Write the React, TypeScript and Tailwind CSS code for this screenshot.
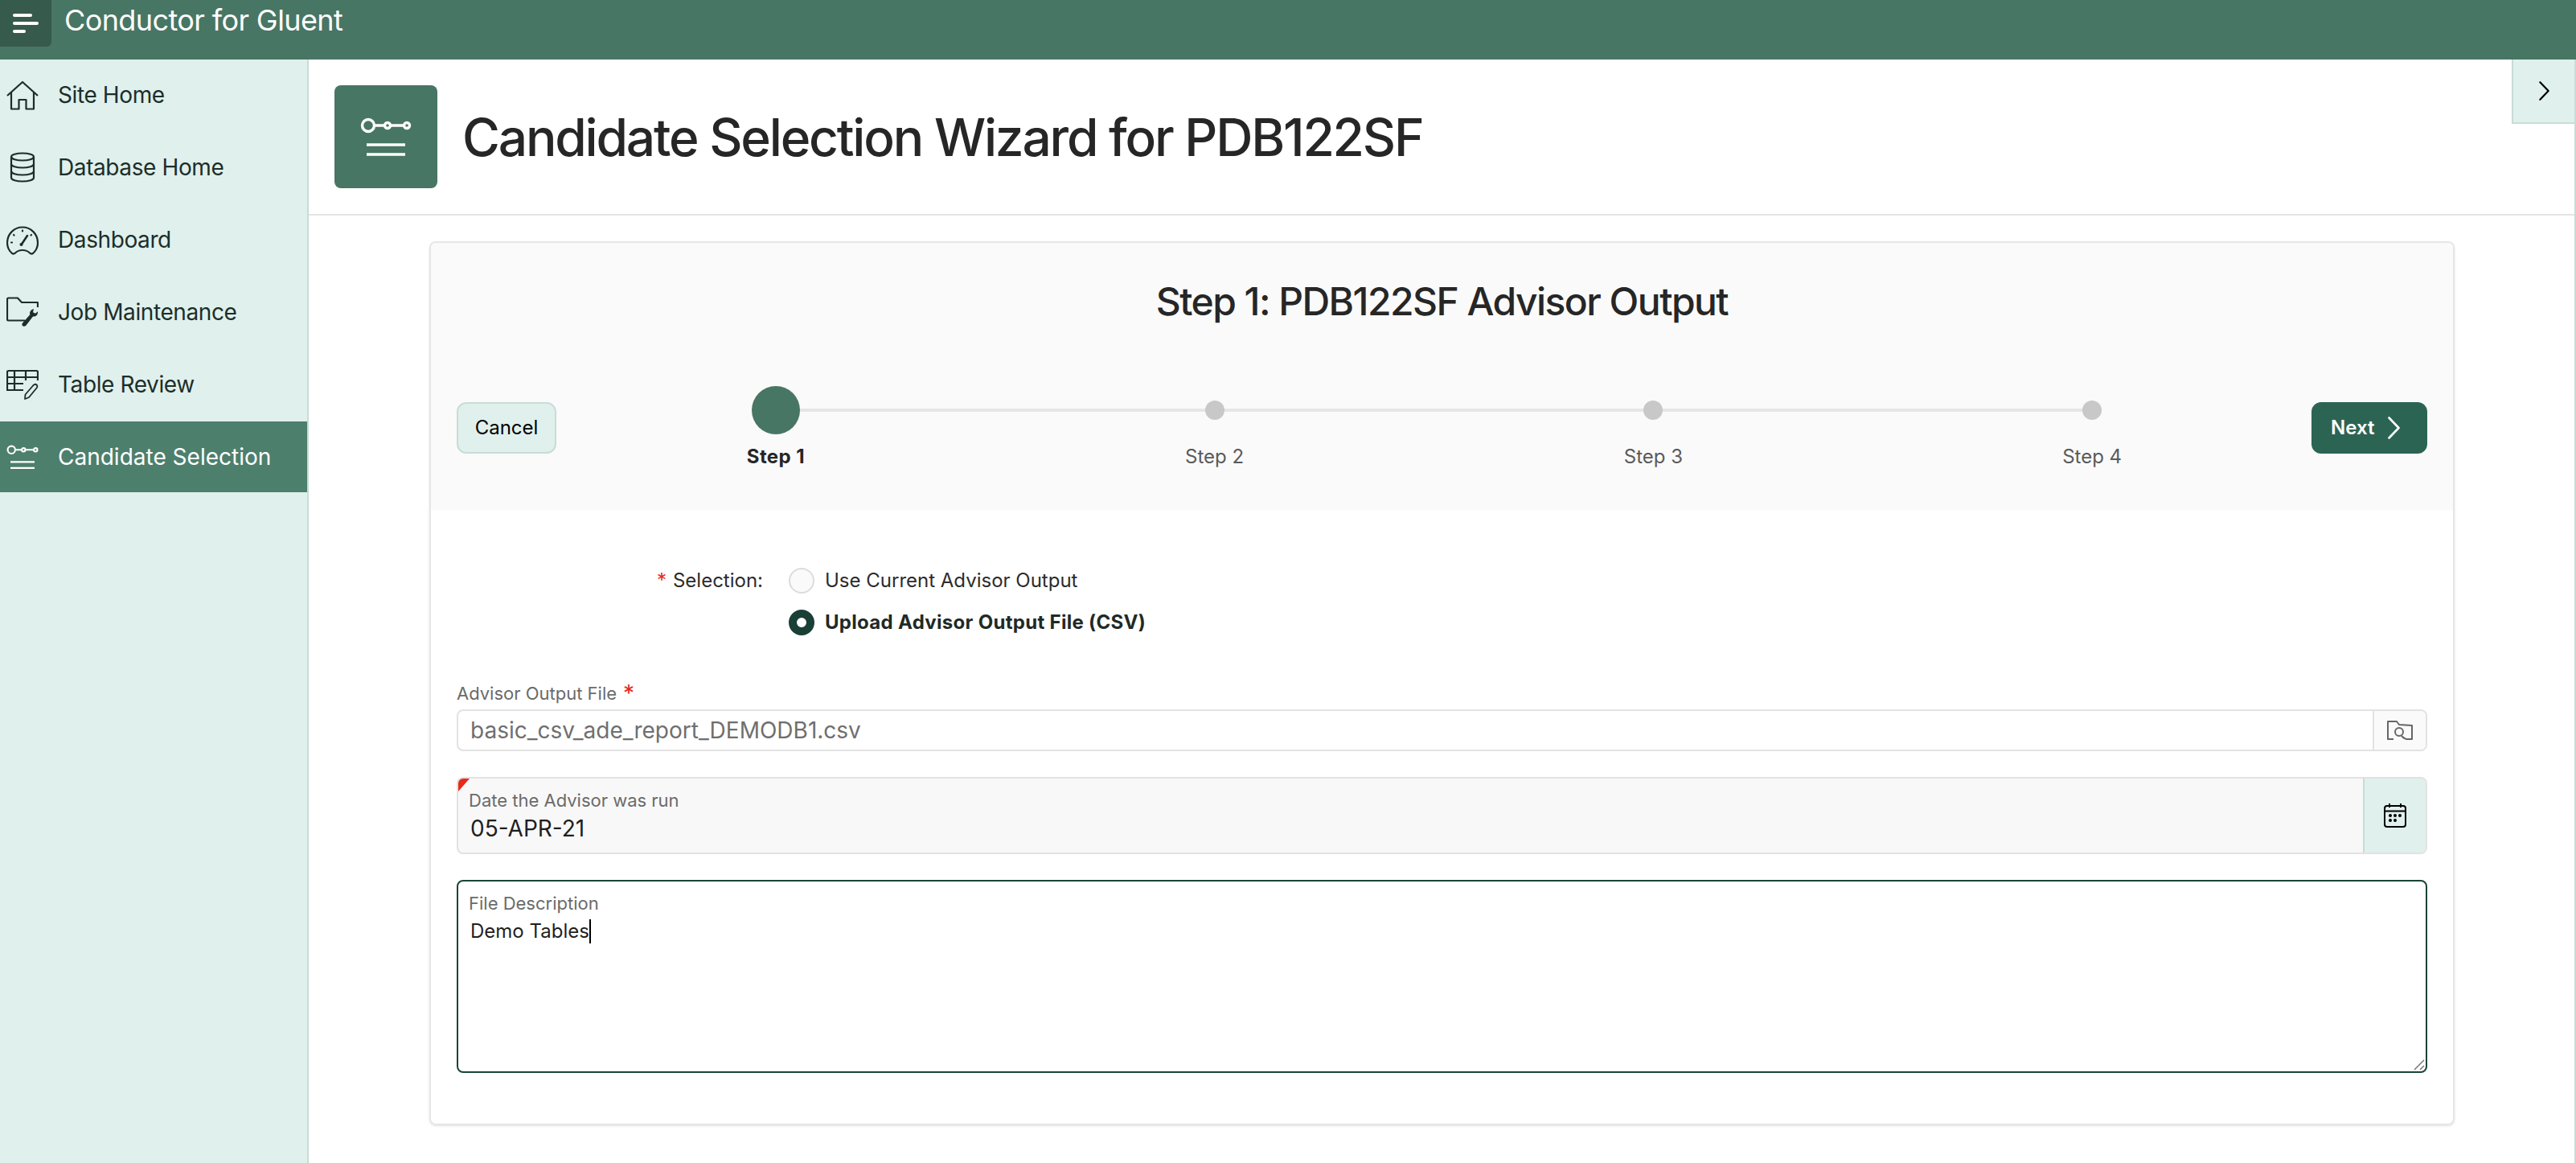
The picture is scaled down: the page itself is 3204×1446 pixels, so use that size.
import React from "react";

const navItems = [
  { label: "Site Home", icon: <HomeIcon /> },
  { label: "Database Home", icon: <DatabaseIcon /> },
  { label: "Dashboard", icon: <GaugeIcon /> },
  { label: "Job Maintenance", icon: <FolderWrenchIcon /> },
  { label: "Table Review", icon: <TableEditIcon /> },
  { label: "Candidate Selection", icon: <CandidateIcon size={40} />, active: true },
];

const steps = ["Step 1", "Step 2", "Step 3", "Step 4"];

function HomeIcon() {
  return (
    <svg width="40" height="40" viewBox="0 0 40 40" fill="none" stroke="currentColor" strokeWidth="2.2" strokeLinejoin="round">
      <path d="M1 21 20 4l19 17" />
      <path d="M6 17v20.5h9.5V26h9v11.5H34V17" />
    </svg>
  );
}

function DatabaseIcon() {
  return (
    <svg width="40" height="40" viewBox="0 0 40 40" fill="none" stroke="currentColor" strokeWidth="2.2">
      <ellipse cx="20" cy="7" rx="14" ry="4.5" />
      <path d="M6 7v26c0 2.5 6.3 4.5 14 4.5s14-2 14-4.5V7" />
      <path d="M6 16c0 2.5 6.3 4.5 14 4.5S34 18.500 34 16" />
      <path d="M6 25c0 2.500 6.300 4.500 14 4.500S34 27.500 34 25" />
    </svg>
  );
}

function GaugeIcon() {
  return (
    <svg width="40" height="40" viewBox="0 0 40 40" fill="none" stroke="currentColor" strokeWidth="2.2" strokeLinecap="round">
      <path d="M7 37C3 33.500 1 29 1 24 1 13 9.500 4.500 20 4.500S39 13 39 24c0 5-2 9.500-6 13-1.500 1-3 .5-4-.5-2-2-5.500-3.500-9-3.500s-7 1.500-9 3.500c-1 1-2.500 1.500-4 .5Z" />
      <path d="M19 25.500 26 15" strokeWidth="2.600" />
      <circle cx="18.500" cy="26" r="2" fill="currentColor" stroke="none" />
      <path d="M20 8.500v1M9 14l.5.500M31 14l-.5.500M6 23.500h1" />
    </svg>
  );
}

function FolderWrenchIcon() {
  return (
    <svg width="40" height="40" viewBox="0 0 40 40" fill="none">
      <path d="M23 30.500H2.500a1.500 1.500 0 0 1-1.500-1.500V4a1.500 1.500 0 0 1 1.500-1.500h11.500L19 8h19.500a.5.500 0 0 1 .5.500V14" stroke="currentColor" strokeWidth="2.200" />
      <path d="M39 20.500c0 3.500-3 5.500-6 5l-8.500 11c-1.200 1.500-3 1.700-4.200.7-1.200-1-1.200-2.700 0-4l9-10c-1-3.500 1.200-6.500 4.700-7l-1 4 3 1.500 3-2.500Z" fill="currentColor" />
    </svg>
  );
}

function TableEditIcon() {
  return (
    <svg width="40" height="40" viewBox="0 0 40 40" fill="none" stroke="currentColor" strokeWidth="2.200">
      <path d="M21 27H1V4.500A1.500 1.500 0 0 1 2.500 3h35A1.500 1.500 0 0 1 39 4.500V15" />
      <path d="M1 11h38M1 19h20M10 3v24M24 3v12" />
      <path d="M24.500 37.500 23 38l.5-5.500 10-11.500c1.500-1.500 3-1.500 4-.5s1.200 2.500 0 4L28 36Z" strokeWidth="1.800" strokeLinejoin="round" />
    </svg>
  );
}

function CandidateIcon({ size }: { size: number }) {
  return (
    <svg width={size} height={size} viewBox="0 0 64 64" fill="none" stroke="currentColor" strokeWidth="3.400">
      <circle cx="10" cy="18" r="7.500" />
      <circle cx="34" cy="18" r="3.500" />
      <circle cx="58" cy="18" r="3.500" />
      <path d="M17.500 18h13M37.500 18h17" />
      <path d="M8 42h48M8 54h48" strokeWidth="3.600" />
    </svg>
  );
}

function Chevron({ className }: { className: string }) {
  return (
    <svg className={className} viewBox="0 0 15 28" fill="none" stroke="currentColor" strokeWidth="2.600" strokeLinecap="round" strokeLinejoin="round">
      <path d="M1.500 1.500 13.500 14 1.500 26.500" />
    </svg>
  );
}

function Radio({ checked, label }: { checked?: boolean; label: string }) {
  return (
    <div className="flex items-center gap-[13px] h-8">
      {checked ? (
        <span className="w-8 h-8 rounded-full border-[10px] border-[#1a3f36] bg-white" />
      ) : (
        <span className="w-8 h-8 rounded-full border-2 border-[#dcdcdc] bg-[#fafafa]" />
      )}
      <span className={`text-2xl ${checked ? "font-bold tracking-[0.3px] text-[#1f2a27]" : "text-[#2c2c2c]"}`}>{label}</span>
    </div>
  );
}

export default function App() {
  return (
    <div className="h-screen w-full overflow-hidden flex flex-col bg-white font-['Inter',sans-serif] text-[#262626]">
      <header className="h-[74px] shrink-0 bg-[#487664] flex items-start">
        <button className="w-16 h-[58px] bg-[#365a4c] rounded-br-md flex flex-col justify-center gap-[6px] pl-4">
          <span className="block w-6 h-1 rounded-full bg-white" />
          <span className="block w-8 h-1 rounded-full bg-white" />
          <span className="block w-4 h-1 rounded-full bg-white" />
        </button>
        <span className="ml-4 text-[36px] leading-[50px] tracking-[-0.6px] text-white">Conductor for Gluent</span>
      </header>

      <div className="flex-1 flex min-h-0">
        <aside className="w-[384px] shrink-0 bg-[#e0f0ec] border-r-2 border-[#c9dcd6] flex flex-col gap-[2px]">
          {navItems.map((item) => (
            <div
              key={item.label}
              className={`h-[88px] flex items-center gap-[24px] pl-2 text-[28px] ${
                item.active ? "bg-[#4d7f6d] text-white" : "text-[#1c2e29] tracking-[-0.4px]"
              }`}
            >
              {item.icon}
              <span>{item.label}</span>
            </div>
          ))}
        </aside>

        <main className="flex-1 min-w-0 relative border-r-2 border-[#c9dcd6]">
          <div className="absolute top-0 right-0 w-[78px] h-20 bg-[#e0f0ec] border-l-2 border-b-2 border-[#c9dcd6] flex items-center justify-center">
            <Chevron className="w-[13px] h-6 text-black" />
          </div>

          <div className="h-[194px] border-b-2 border-[#e4e4e4] flex items-center gap-[31px] pl-8">
            <div className="w-32 h-[128px] rounded-lg bg-[#487664] text-white flex items-center justify-center">
              <CandidateIcon size={64} />
            </div>
            <h1 className="text-[64px] leading-none font-[450] tracking-[-2.2px] pt-[2px] text-[#262626]">Candidate Selection Wizard for PDB122SF</h1>
          </div>

          <section className="mt-8 ml-[150px] mr-[149px] border-2 border-[#e6e6e6] rounded-lg shadow-sm">
            <div className="h-[332px] bg-[#fafafa] rounded-t-md">
              <h2 className="pt-[42px] text-center text-[48px] leading-[62px] font-[450] tracking-[-1.55px] text-[#262626]">
                Step 1: PDB122SF Advisor Output
              </h2>
              <div className="mt-[74px] px-8 flex items-start">
                <button className="mt-5 w-[124px] h-16 rounded-xl border-2 border-[#c9dcd6] bg-[#e0f0ec] text-2xl text-black">
                  Cancel
                </button>
                <div className="flex-1 flex">
                  {steps.map((step, i) => (
                    <div key={step} className="flex-1 relative flex flex-col items-center">
                      {i < 3 && <div className="absolute top-7 left-1/2 w-full h-1 bg-[#e6e6e6]" />}
                      <div className="relative h-[60px] flex items-center justify-center">
                        {i === 0 ? (
                          <span className="w-[60px] h-[60px] rounded-full bg-[#487664]" />
                        ) : (
                          <span className="w-6 h-6 rounded-full bg-[#c8c8c8]" />
                        )}
                      </div>
                      <span className={`mt-3 text-2xl leading-8 ${i === 0 ? "font-bold tracking-[0.4px] text-[#262626]" : "text-[#5a5a5a]"}`}>
                        {step}
                      </span>
                    </div>
                  ))}
                </div>
                <button className="mt-5 w-36 h-16 rounded-xl bg-[#2c6454] text-white text-2xl font-semibold flex items-center pl-6 gap-[17px]">
                  Next
                  <Chevron className="w-[15px] h-7" />
                </button>
              </div>
            </div>

            <div className="pt-[72px] pb-[63px]">
              <div className="flex gap-8">
                <div className="w-[413px] h-8 flex items-center justify-end text-2xl text-[#2c2c2c]">
                  <span className="text-[#e8291c] mr-2">*</span>Selection:
                </div>
                <div className="flex flex-col gap-5">
                  <Radio label="Use Current Advisor Output" />
                  <Radio checked label="Upload Advisor Output File (CSV)" />
                </div>
              </div>

              <div className="mt-14 px-8">
                <div className="h-8 flex items-center text-[22px] text-[#6b6b6b]">
                  Advisor Output File<span className="text-[#e8291c] text-[28px] leading-8 ml-2">*</span>
                </div>
                <div className="mt-1 h-[52px] flex border-2 border-[#e2e2e2] rounded-lg overflow-hidden">
                  <div className="flex-1 flex items-center pl-[15px] text-[28px] text-[#6f6f6f]">basic_csv_ade_report_DEMODB1.csv</div>
                  <div className="w-[66px] bg-[#fafafa] border-l-2 border-[#e2e2e2] flex items-center justify-center text-[#666666]">
                    <svg width="32" height="24" viewBox="0 0 32 24" fill="none" stroke="currentColor" strokeWidth="2" strokeLinejoin="round">
                      <path d="M8 23H1V1h11l3 4 16 1v17h-6c-3 0-5-2-7-4" />
                      <circle cx="15" cy="14" r="5" />
                    </svg>
                  </div>
                </div>

                <div className="mt-8 h-24 relative flex border-2 border-[#e2e2e2] rounded-lg overflow-hidden bg-[#f8f8f8]">
                  <span className="absolute top-0 left-0 w-0 h-0 border-t-[16px] border-r-[14px] border-t-[#e8291c] border-r-transparent" />
                  <div className="flex-1 pl-[13px] pt-[11px]">
                    <div className="text-[22px] leading-8 text-[#6b6b6b]">Date the Advisor was run</div>
                    <div className="mt-[3px] pl-[2px] text-[28px] leading-8 text-[#1f1f1f]">05-APR-21</div>
                  </div>
                  <div className="w-[78px] bg-[#e0f0ec] border-l-2 border-[#c9dcd6] flex items-center justify-center text-black">
                    <svg width="28" height="30" viewBox="0 0 28 30" fill="none" stroke="currentColor" strokeWidth="2">
                      <rect x="1" y="3" width="26" height="26" rx="3" />
                      <path d="M1 9.500h26M7 0v5M21 0v5" />
                      <g fill="currentColor" stroke="none">
                        <circle cx="8" cy="15" r="2" />
                        <circle cx="14" cy="15" r="2" />
                        <circle cx="20" cy="15" r="2" />
                        <circle cx="8" cy="21" r="2" />
                        <circle cx="14" cy="21" r="2" />
                      </g>
                    </svg>
                  </div>
                </div>

                <div className="mt-8 h-60 relative border-2 border-[#1a4438] rounded-lg bg-white pl-[13px] pt-[11px]">
                  <div className="text-[22px] leading-8 text-[#6b6b6b]">File Description</div>
                  <div className="mt-[3px] pl-[2px] text-2xl leading-8 text-[#1f1f1f] flex items-center">
                    Demo Tables<span className="inline-block w-[2px] h-[30px] bg-black" />
                  </div>
                  <svg className="absolute right-[1px] bottom-[1px] text-[#777777]" width="14" height="14" viewBox="0 0 14 14" stroke="currentColor" strokeWidth="1.500">
                    <path d="M1 13 13 1M8 13l5-5" />
                  </svg>
                </div>
              </div>
            </div>
          </section>
        </main>
      </div>
    </div>
  );
}
